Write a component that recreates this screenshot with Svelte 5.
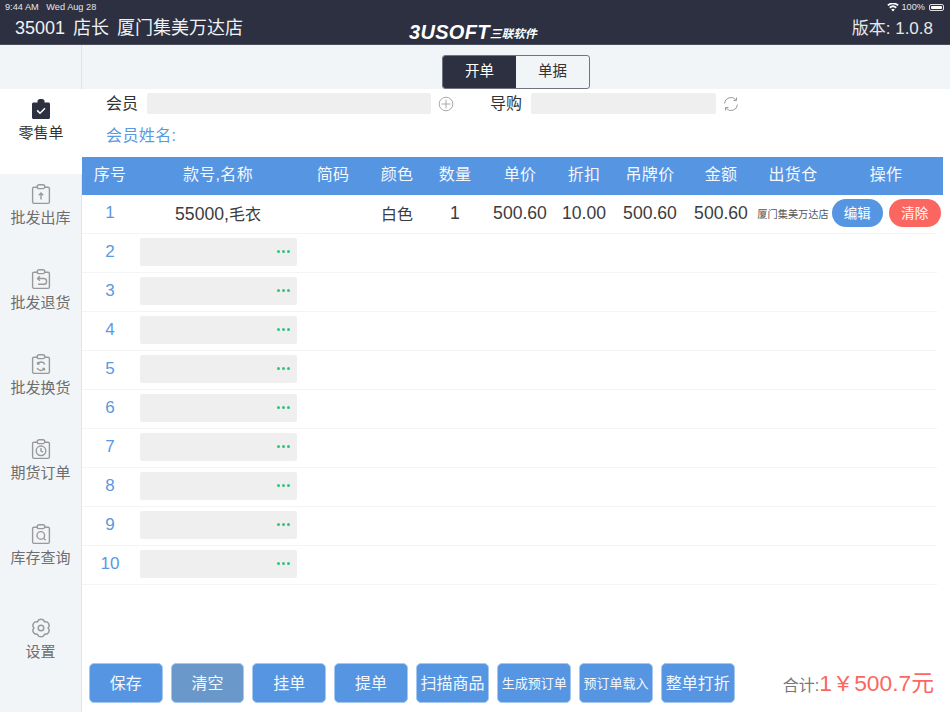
<script lang="ts">
  const navItems = [
    { label: '零售单', kind: 'check', active: true },
    { label: '批发出库', kind: 'up' },
    { label: '批发退货', kind: 'back' },
    { label: '批发换货', kind: 'swap' },
    { label: '期货订单', kind: 'clock' },
    { label: '库存查询', kind: 'search' }
  ];

  const columns = ['序号', '款号,名称', '简码', '颜色', '数量', '单价', '折扣', '吊牌价', '金额', '出货仓', '操作'];
  const emptyRows = [2, 3, 4, 5, 6, 7, 8, 9, 10];

  const actions = [
    { label: '保存' },
    { label: '清空', muted: true },
    { label: '挂单' },
    { label: '提单' },
    { label: '扫描商品' },
    { label: '生成预订单', small: true },
    { label: '预订单载入', small: true },
    { label: '整单打折' }
  ];
</script>

<div class="app">
  <header class="topbar">
    <div class="status">
      <span>9:44 AM&nbsp;&nbsp; Wed Aug 28</span>
      <span class="status-right">
        <svg class="wifi" width="12" height="9" viewBox="0 0 12 9">
          <path d="M6 8.6 4.2 6.4a2.8 2.8 0 0 1 3.6 0zM3.3 5.4 2.2 4a5.8 5.8 0 0 1 7.6 0L8.7 5.4a4.2 4.2 0 0 0-5.4 0zM1.4 3 .3 1.7a8.6 8.6 0 0 1 11.4 0L10.6 3a7 7 0 0 0-9.2 0z" fill="#fff"/>
        </svg>
        <span>100%</span>
        <span class="battery"><i></i></span>
      </span>
    </div>
    <div class="titlebar">
      <div class="store">35001&nbsp; 店长&nbsp; 厦门集美万达店</div>
      <div class="logo"><b>3USOFT</b><span>三联软件</span></div>
      <div class="version">版本: 1.0.8</div>
    </div>
  </header>

  <div class="body">
    <aside class="sidebar">
      <div class="side-top"></div>
      {#each navItems as item}
        <div class="nav-item" class:active={item.active}>
          <svg width="22" height="22" viewBox="0 0 22 22" class="nav-icon">
            {#if item.active}
              <path d="M3.5 4.5h4V3.2C7.5 2 8.5 1 10 1h2c1.500 0 2.500 1 2.500 2.200v1.300h4c.8 0 1.500.7 1.500 1.500v13.500c0 .8-.7 1.500-1.500 1.500h-15c-.8 0-1.500-.7-1.500-1.500V6c0-.8.700-1.500 1.500-1.500z" fill="#2c3040"/>
              <path d="M7.200 12.400l2.800 2.800 5-5" fill="none" stroke="#fff" stroke-width="1.500"/>
            {:else}
              <g fill="none" stroke="#999" stroke-width="1.400">
                <path d="M7.500 4.200H4c-.8 0-1.400.6-1.400 1.400v13.400c0 .8.6 1.400 1.400 1.400h14c.8 0 1.400-.6 1.400-1.400V5.600c0-.8-.6-1.400-1.400-1.400h-3.500"/>
                <rect x="7.200" y="1.800" width="7.600" height="3.800" rx="1.900"/>
                {#if item.kind === 'up'}
                  <path d="M11 16.500v-6.500M8.800 12.200 11 10l2.200 2.200"/>
                {:else if item.kind === 'back'}
                  <path d="M7.500 10.500h6.200a2.900 2.900 0 0 1 0 5.800H8M9.800 8.200 7.500 10.500l2.300 2.300"/>
                {:else if item.kind === 'swap'}
                  <path d="M14.800 11.500a4 4 0 0 0-7.200-.5M7.200 15a4 4 0 0 0 7.200.5M7.600 9v2h2M14.400 17.500v-2h-2"/>
                {:else if item.kind === 'clock'}
                  <circle cx="11" cy="12.800" r="4.800"/>
                  <path d="M11 10v3l2 1.200"/>
                {:else if item.kind === 'search'}
                  <circle cx="10.800" cy="12.400" r="3.800"/>
                  <path d="M13.600 15.200l2 2"/>
                {/if}
              </g>
            {/if}
          </svg>
          <span>{item.label}</span>
        </div>
      {/each}
      <div class="nav-item settings">
        <svg width="22" height="22" viewBox="0 0 22 22" class="nav-icon">
          <g fill="none" stroke="#999" stroke-width="1.400" stroke-linejoin="round">
            <path d="M14.500 4.940A3.600 3.600 0 0 1 18 11 3.600 3.600 0 0 1 14.500 17.060 3.600 3.600 0 0 1 7.500 17.060 3.600 3.600 0 0 1 4 11 3.600 3.600 0 0 1 7.500 4.940 3.600 3.600 0 0 1 14.500 4.940Z"/>
            <circle cx="11" cy="11" r="2.800"/>
          </g>
        </svg>
        <span>设置</span>
      </div>
    </aside>

    <main class="content">
      <div class="subbar">
        <div class="segment">
          <span class="seg on">开单</span>
          <span class="seg">单据</span>
        </div>
      </div>

      <div class="form-row">
        <label class="lbl member-lbl" for="member">会员</label>
        <div id="member" class="field member-field"></div>
        <svg class="plus" width="16" height="16" viewBox="0 0 16 16">
          <g fill="none" stroke="#a9a9a9" stroke-width="1">
            <circle cx="8" cy="8" r="6.800"/>
            <path d="M8 3.500v9M3.500 8h9"/>
          </g>
        </svg>
        <label class="lbl guide-lbl" for="guide">导购</label>
        <div id="guide" class="field guide-field"></div>
        <svg class="refresh" width="16" height="16" viewBox="0 0 16 16">
          <g fill="none" stroke="#9a9a9a" stroke-width="1">
            <path d="M1.500 7.500A6.500 6.500 0 0 1 12.800 3.600"/>
            <path d="M14.500 8.500A6.500 6.500 0 0 1 3.200 12.400"/>
            <path d="M13.500 1.500v3h-3M2.500 14.500v-3h3" stroke-width="1"/>
          </g>
        </svg>
      </div>
      <div class="member-name">会员姓名:</div>

      <div class="table">
        <div class="grid thead">
          {#each columns as col}<span>{col}</span>{/each}
        </div>
        <div class="grid tr">
          <span class="no">1</span>
          <span class="num">55000,<span class="cjk">毛衣</span></span>
          <span></span>
          <span class="cjk">白色</span>
          <span class="num">1</span>
          <span class="num">500.60</span>
          <span class="num">10.00</span>
          <span class="num">500.60</span>
          <span class="num">500.60</span>
          <span class="wh">厦门集美万达店</span>
          <span class="ops">
            <button class="pill blue">编辑</button>
            <button class="pill red">清除</button>
          </span>
        </div>
        {#each emptyRows as n}
          <div class="grid tr">
            <span class="no">{n}</span>
            <span class="pick"><i class="dots"><b></b><b></b><b></b></i></span>
          </div>
        {/each}
      </div>

      <footer class="footer">
        <div class="actions">
          {#each actions as a}
            <button class="act" class:muted={a.muted} class:small={a.small}>{a.label}</button>
          {/each}
        </div>
        <div class="total">合计:<em>1 ¥ 500.7元</em></div>
      </footer>
    </main>
  </div>
</div>

<style>
  :global(body) {
    margin: 0;
    background: #fff;
    font-family: "Liberation Sans", "Noto Sans CJK SC", sans-serif;
  }

  .app {
    width: 950px;
    height: 712px;
    display: flex;
    flex-direction: column;
    overflow: hidden;
  }

  .topbar {
    height: 44px;
    background: #2c3040;
    color: #fff;
    border-bottom: 1px solid #4a4e5c;
    flex: none;
    box-sizing: content-box;
  }

  .status {
    height: 14px;
    padding: 0 4px 0 5px;
    display: flex;
    justify-content: space-between;
    align-items: center;
    font-size: 9.200px;
    color: #e4e5e8;
  }

  .status-right {
    display: flex;
    align-items: center;
    gap: 3px;
  }

  .battery {
    width: 15px;
    height: 7px;
    border: 1px solid #ddd;
    border-radius: 2px;
    padding: 1px;
    box-sizing: border-box;
    display: flex;
    margin-right: 2px;
    margin-left: 1px;
  }

  .battery i {
    flex: 1;
    background: #fff;
    border-radius: 1px;
  }

  .titlebar {
    height: 30px;
    display: flex;
    align-items: center;
    justify-content: space-between;
    padding: 0 17px 0 15px;
    position: relative;
  }

  .store {
    font-size: 18px;
    word-spacing: -1px;
    color: #f1f1f3;
    margin-top: -6px;
  }

  .version {
    font-size: 17px;
    color: #e8e8ea;
    margin-top: -6px;
  }

  .logo {
    position: absolute;
    left: 409px;
    top: 8px;
    display: flex;
    align-items: center;
    color: #fff;
    white-space: nowrap;
    height: 20px;
  }

  .logo b {
    font: italic 700 20px/20px "Liberation Sans", sans-serif;
    letter-spacing: 0.300px;
  }

  .logo span {
    font-size: 11.800px;
    font-weight: 700;
    font-style: italic;
  }

  .body {
    flex: 1;
    display: flex;
    min-height: 0;
  }

  .sidebar {
    width: 82px;
    flex: none;
    background: #f2f5f8;
    border-right: 1px solid #e2e4e7;
    box-sizing: border-box;
    display: flex;
    flex-direction: column;
  }

  .side-top {
    height: 44px;
  }

  .nav-item {
    height: 85px;
    display: flex;
    flex-direction: column;
    align-items: center;
    padding-top: 9px;
    box-sizing: border-box;
    font-size: 15px;
    color: #6e6e6e;
    line-height: 20px;
  }

  .nav-item.active {
    background: #fff;
    color: #333;
    width: 82px;
  }

  .nav-icon {
    margin-bottom: 3px;
  }

  .settings {
    margin-top: 9px;
  }

  .content {
    flex: 1;
    display: flex;
    flex-direction: column;
    min-width: 0;
  }

  .subbar {
    height: 44px;
    background: #f2f5f8;
    display: flex;
    justify-content: center;
    align-items: flex-end;
    flex: none;
  }

  .segment {
    display: flex;
    width: 148px;
    height: 34px;
    border: 1px solid #6f7480;
    border-radius: 3px;
    box-sizing: border-box;
    overflow: hidden;
    font-size: 14.500px;
  }

  .seg {
    flex: 1;
    display: flex;
    align-items: center;
    justify-content: center;
    color: #333;
    padding-bottom: 5px;
  }

  .seg.on {
    background: #2c3040;
    color: #fff;
  }

  .form-row {
    height: 29px;
    display: flex;
    align-items: center;
    padding-left: 24px;
    flex: none;
  }

  .lbl {
    font-size: 16px;
    color: #333;
    padding-bottom: 3px;
  }

  .field {
    background: #efefef;
    height: 21px;
    border-radius: 2px;
  }

  .member-field {
    width: 284px;
    margin-left: 9px;
  }

  .plus {
    margin-left: 7px;
  }

  .guide-lbl {
    margin-left: 36px;
  }

  .guide-field {
    width: 185px;
    margin-left: 9px;
  }

  .refresh {
    margin-left: 7px;
  }

  .member-name {
    height: 39px;
    padding-left: 24px;
    font-size: 16px;
    letter-spacing: 0.400px;
    line-height: 36px;
    color: #5b98e2;
    flex: none;
  }

  .table {
    flex: 1;
    min-height: 0;
  }

  .grid {
    display: grid;
    grid-template-columns: 56px 160px 70px 58px 58px 72px 56px 76px 66px 78px 108px;
    align-items: center;
    justify-items: center;
    white-space: nowrap;
  }

  .thead {
    width: 861px;
    height: 38px;
    box-sizing: border-box;
    padding-bottom: 6px;
    background: #5695e1;
    color: #f4f8fd;
    font-size: 16px;
    letter-spacing: 0.300px;
  }

  .tr {
    width: 855px;
    height: 39px;
    box-sizing: border-box;
    padding-bottom: 2px;
    border-bottom: 1px solid #f4f4f4;
    color: #3c3c3c;
    font-size: 16px;
  }

  .num {
    font-size: 17.600px;
  }

  .cjk {
    font-size: 16px;
  }

  .no {
    color: #5b98e2;
    font-size: 17px;
  }

  .wh {
    font-size: 10.200px;
    color: #555;
  }

  .ops {
    display: flex;
    gap: 6px;
  }

  .pill {
    width: 51.500px;
    height: 28px;
    padding: 0 0 2px;
    border: 0;
    border-radius: 14px;
    color: #fff;
    font: inherit;
    font-size: 13.500px;
  }

  .blue {
    background: #5695e1;
  }

  .red {
    background: #fb6760;
  }

  .pick {
    grid-column: 2;
    width: 157px;
    height: 28px;
    background: #efefef;
    border-radius: 2px;
    display: flex;
    align-items: center;
    justify-content: flex-end;
    padding-right: 7px;
    box-sizing: border-box;
    justify-self: center;
    margin-bottom: 1px;
  }

  .dots {
    display: flex;
    gap: 2px;
  }

  .dots b {
    width: 3px;
    height: 3px;
    border-radius: 50%;
    background: #32c27c;
  }

  .footer {
    height: 57px;
    display: flex;
    align-items: flex-start;
    justify-content: space-between;
    padding: 8px 16px 0 7px;
    box-sizing: border-box;
    flex: none;
  }

  .actions {
    display: flex;
    gap: 8px;
  }

  .act {
    width: 73.700px;
    height: 40px;
    padding: 0 0 2px;
    background: #5695e1;
    border: 1px solid #a5c8f0;
    border-radius: 5px;
    color: #f4f8fd;
    font: inherit;
    font-size: 16px;
    white-space: nowrap;
  }

  .act.muted {
    background: #6a98ca;
  }

  .act.small {
    font-size: 13px;
  }

  .total {
    font-size: 16px;
    color: #777;
    margin-top: 2px;
    white-space: nowrap;
  }

  .total em {
    font-style: normal;
    font-size: 22.800px;
    word-spacing: -1.500px;
    color: #fb6760;
  }
</style>
